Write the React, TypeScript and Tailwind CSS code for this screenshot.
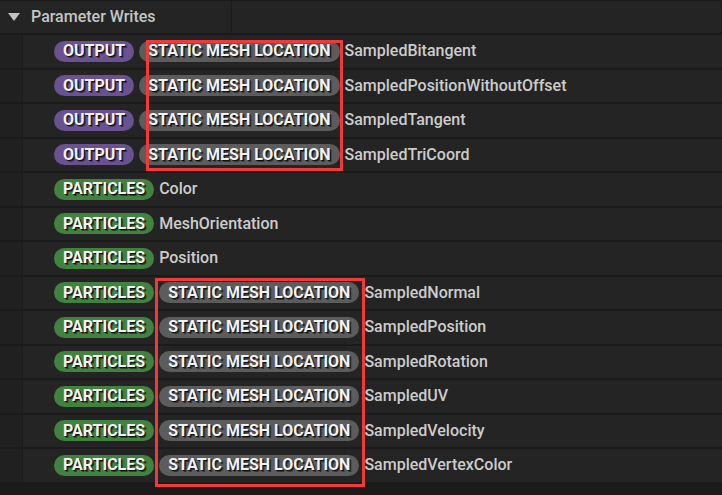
import React from 'react'

type Tag = 'OUTPUT' | 'PARTICLES'

interface Row {
  tag: Tag
  mesh?: boolean
  name: string
}

const rows: Row[] = [
  { tag: 'OUTPUT', mesh: true, name: 'SampledBitangent' },
  { tag: 'OUTPUT', mesh: true, name: 'SampledPositionWithoutOffset' },
  { tag: 'OUTPUT', mesh: true, name: 'SampledTangent' },
  { tag: 'OUTPUT', mesh: true, name: 'SampledTriCoord' },
  { tag: 'PARTICLES', name: 'Color' },
  { tag: 'PARTICLES', name: 'MeshOrientation' },
  { tag: 'PARTICLES', name: 'Position' },
  { tag: 'PARTICLES', mesh: true, name: 'SampledNormal' },
  { tag: 'PARTICLES', mesh: true, name: 'SampledPosition' },
  { tag: 'PARTICLES', mesh: true, name: 'SampledRotation' },
  { tag: 'PARTICLES', mesh: true, name: 'SampledUV' },
  { tag: 'PARTICLES', mesh: true, name: 'SampledVelocity' },
  { tag: 'PARTICLES', mesh: true, name: 'SampledVertexColor' },
]

const tagColors: Record<Tag, string> = {
  OUTPUT: 'bg-[#6a5190]',
  PARTICLES: 'bg-[#41823f]',
}

function Pill({ label, color }: { label: string; color: string }) {
  return (
    <span
      className={`inline-flex h-[21px] items-center rounded-full px-[9px] text-[16px] font-bold leading-none text-[#f2f2f2] [text-shadow:1px_1px_0_#111,2px_2px_0_#1118] ${color}`}
    >
      {label}
    </span>
  )
}

export default function App() {
  return (
    <div
      className="relative h-[495px] w-[722px] overflow-hidden bg-[#1b1b1b]"
      style={{ fontFamily: 'Roboto, "Noto Sans", sans-serif' }}
    >
      {/* header */}
      <div className="mt-[1px] flex h-[32px] bg-[#242424]">
        <div className="flex w-[232px] items-center border-r border-[#1a1a1a]">
          <svg width="12" height="8" viewBox="0 0 12 8" className="ml-[8px]">
            <path d="M0 0 H12 L6 8 Z" fill="#c2c2c2" />
          </svg>
          <span className="ml-[11px] text-[16px] font-medium text-[#c4c4c4]">Parameter Writes</span>
        </div>
        <div className="flex-1 border-r border-[#1a1a1a]" />
      </div>

      <div className="mt-[2px] flex flex-col gap-[2px]">
        {rows.map((row) => (
          <div key={row.name} className="flex h-[32.5px]">
            <div className="w-[22px] bg-[#202020]" />
            <div className="ml-[1px] flex flex-1 items-center gap-[5px] bg-[#242424] pl-[31px]">
              <Pill label={row.tag} color={tagColors[row.tag]} />
              {row.mesh && <Pill label="STATIC MESH LOCATION" color="bg-[#5c5c5c]" />}
              <span className="text-[16px] font-medium text-[#cccccc]">{row.name}</span>
            </div>
          </div>
        ))}
      </div>

      {/* highlight boxes */}
      <div className="absolute left-[146px] top-[40px] h-[131px] w-[197px] border-[3px] border-[#f03a3a]" />
      <div className="absolute left-[155px] top-[278px] h-[209px] w-[210px] border-[3px] border-[#f03a3a]" />
    </div>
  )
}
